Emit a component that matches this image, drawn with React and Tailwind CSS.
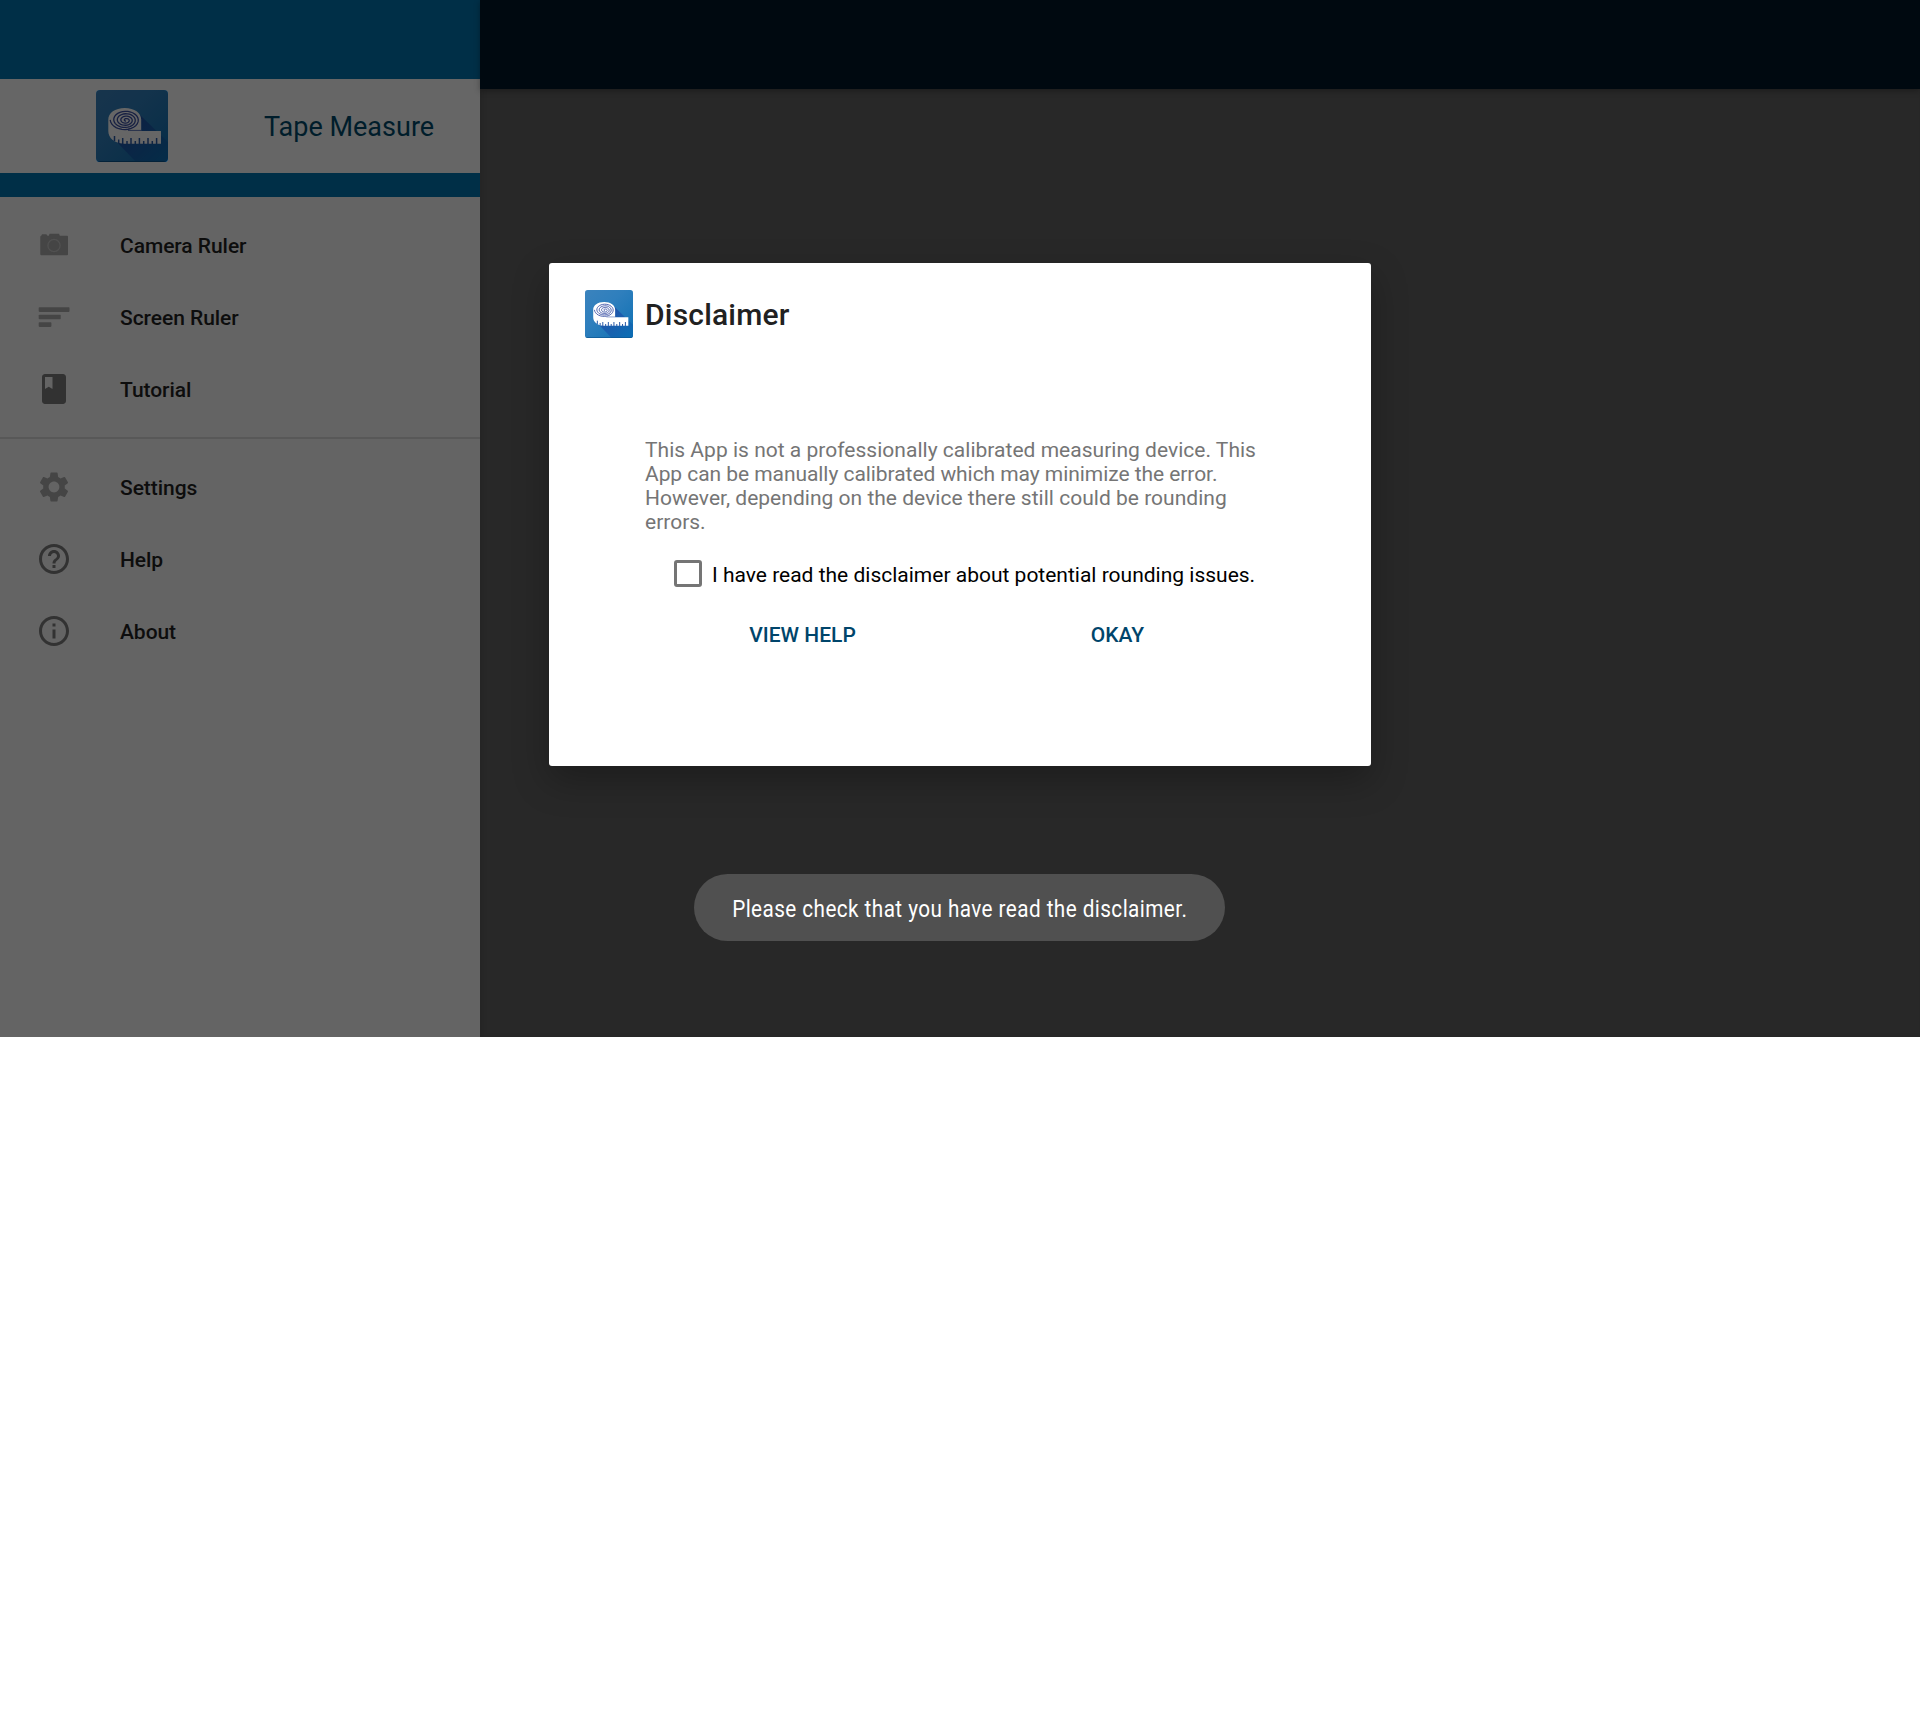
import React from "react";
import { MdBook, MdSettings, MdHelpOutline, MdInfoOutline } from "react-icons/md";

function spiralPath(cx, cy, rx, ry, turns) {
  const steps = turns * 28;
  const points = [];
  for (let i = 8; i <= steps; i++) {
    const t = i / steps;
    const angle = t * turns * Math.PI * 2;
    const x = cx + 1.2 * (1 - t) + Math.cos(angle) * rx * t;
    const y = cy + 0.6 * (1 - t) + Math.sin(angle) * ry * t;
    points.push(`${x.toFixed(2)} ${y.toFixed(2)}`);
  }
  return "M" + points.join("L");
}

const TAPE_SPIRAL = spiralPath(29, 29.8, 14.8, 10.3, 4.5);

function TapeLogo({ id, className, dim }) {
  return (
    <svg viewBox="0 0 72 72" className={className}>
      <defs>
        <linearGradient id={id + "bg"} x1="0" y1="0" x2="1" y2="1">
          <stop offset="0" stopColor="#3b83bd" />
          <stop offset="0.4" stopColor="#2f7fbd" />
          <stop offset="1" stopColor="#0d70b3" />
        </linearGradient>
        <linearGradient id={id + "sh"} x1="0.2" y1="0.2" x2="0.9" y2="0.9">
          <stop offset="0" stopColor="#2050a8" />
          <stop offset="0.5" stopColor="#1a5fae" />
          <stop offset="1" stopColor="#0d6cb3" />
        </linearGradient>
        <clipPath id={id + "cl"}>
          <rect width="72" height="72" rx="4" />
        </clipPath>
      </defs>
      <g clipPath={`url(#${id}cl)`}>
        <rect width="72" height="72" fill={`url(#${id}bg)`} />
        <path d="M44 25L72 52V72H40L17 48Z" fill={`url(#${id}sh)`} />
        <rect y="71" width="72" height="1" fill="#0b558f" />
        <path d="M12.300 29.500C12.300 23 19 18 28.800 18C38.500 18 45.200 23 45.200 29.500V41H65V53.800H28C18 53 12.300 48 12.300 41Z" fill="#fff" />
        <path d="M45.200 40.400H32" fill="none" stroke="#3453a6" strokeWidth="0.800" />
        <path d={TAPE_SPIRAL} fill="none" stroke="#3a50a5" strokeWidth="1.300" />
        <path
          d="M18.500 46V51M22.700 49.500V53M26.700 48V54M31 51V54M35 48V54M39.300 51V54M43.400 48V54M47.700 51V54M52 48V54M56.300 51V54M60.600 48V54"
          stroke="#2a5aa8"
          strokeWidth="1.500"
        />
      </g>
      {dim && <rect width="72" height="72" rx="4" fill="#000" opacity="0.6" />}
    </svg>
  );
}

function CameraIcon() {
  return (
    <svg viewBox="0 0 36 36" className="size-9">
      <path
        d="M6 7.300h4.300l1.200 1.500h1.300l0.800-2h9.400l0.800 2h7.200a1 1 0 0 1 1 1V27.300a1 1 0 0 1-1 1H5.300a1 1 0 0 1-1-1V9.800a1 1 0 0 1 1-1z"
        fill="#454545"
      />
      <circle cx="18" cy="18.500" r="6.100" fill="none" stroke="#515151" strokeWidth="1.300" />
    </svg>
  );
}

function LinesIcon() {
  return (
    <svg viewBox="0 0 36 36" className="size-9" fill="#454545">
      <rect x="2.700" y="8.200" width="30.800" height="4.700" rx="0.800" />
      <rect x="2.700" y="15.800" width="22" height="4.400" rx="0.800" />
      <rect x="2.700" y="23.200" width="12.700" height="4.700" rx="0.800" />
    </svg>
  );
}

function NavItem({ icon, label }) {
  return (
    <li className="flex h-[72px] items-center pl-9 text-[21px] font-medium text-[#0d0d0d]">
      <span className="w-[84px]">{icon}</span>
      <span className="pt-[3px] tracking-[-0.05px]">{label}</span>
    </li>
  );
}

function Sidebar() {
  return (
    <aside className="flex w-[480px] shrink-0 flex-col bg-[#646464]">
      <div className="h-[79px] bg-[#002f47]" />
      <div className="flex h-[94px] items-center bg-[#666666] pl-24">
        <TapeLogo id="side" className="size-[72px]" dim />
        <span className="ml-24 pt-[2px] text-[27px] text-[#001d2b]">Tape Measure</span>
      </div>
      <div className="h-6 bg-[#002f47]" />
      <ul className="mt-3">
        <NavItem icon={<CameraIcon />} label="Camera Ruler" />
        <NavItem icon={<LinesIcon />} label="Screen Ruler" />
        <NavItem icon={<MdBook size={36} color="#323232" />} label="Tutorial" />
      </ul>
      <div className="mt-3 h-[2px] bg-[#585858]" />
      <ul className="mt-3">
        <NavItem icon={<MdSettings size={36} color="#454545" />} label="Settings" />
        <NavItem icon={<MdHelpOutline size={36} color="#323232" />} label="Help" />
        <NavItem icon={<MdInfoOutline size={36} color="#323232" />} label="About" />
      </ul>
    </aside>
  );
}

function Dialog() {
  return (
    <div className="absolute top-[263px] left-[549px] flex h-[503px] w-[822px] flex-col rounded-[3px] bg-white shadow-[0_14px_36px_rgba(0,0,0,0.28)]">
      <div className="mt-[27px] flex h-12 items-center pl-9">
        <TapeLogo id="dialog" className="size-12" />
        <h1 className="ml-3 text-[30px] font-medium tracking-[0.2px] text-[#212121]">Disclaimer</h1>
      </div>
      <p className="mt-[100px] ml-24 text-[21px] leading-6 whitespace-nowrap text-[#757575]">
        <span className="tracking-[0.02px]">
          This App is not a professionally calibrated measuring device. This
        </span>
        <br />
        <span className="tracking-[-0.06px]">
          App can be manually calibrated which may minimize the error.
        </span>
        <br />
        <span className="tracking-[0.02px]">
          However, depending on the device there still could be rounding
        </span>
        <br />
        errors.
      </p>
      <label className="mt-4 ml-[125px] flex h-12 items-center whitespace-nowrap">
        <span className="mb-px h-[27px] w-7 rounded-[3px] border-3 border-[#757575]" />
        <span className="ml-[10px] pt-[3px] text-[21px] text-black">
          I have read the disclaimer about potential rounding issues.
        </span>
      </label>
      <div className="mt-[14px] ml-24 flex h-12 text-[21px] font-medium text-[#00456b]">
        <button className="w-[315px]">VIEW HELP</button>
        <button className="w-[315px]">OKAY</button>
      </div>
    </div>
  );
}

export default function App() {
  return (
    <div className="min-h-[1733px] bg-white font-[Roboto,sans-serif]">
      <div className="relative flex h-[1037px] w-[1920px] overflow-hidden bg-[#282828]">
        <Sidebar />
        <main className="flex-1 shadow-[inset_3px_0_4px_rgba(0,0,0,0.08)]">
          <div className="h-[89px] bg-[#000910] shadow-[0_2px_6px_rgba(0,0,0,0.3)]" />
        </main>
        <Dialog />
        <div className="absolute top-[874px] left-[694px] flex h-[67px] w-[531px] items-center justify-center rounded-[34px] bg-[#505050]">
          <span className="scale-x-[0.863] pt-[2px] text-[24px] tracking-[0.5px] whitespace-nowrap text-white">
            Please check that you have read the disclaimer.
          </span>
        </div>
      </div>
    </div>
  );
}
